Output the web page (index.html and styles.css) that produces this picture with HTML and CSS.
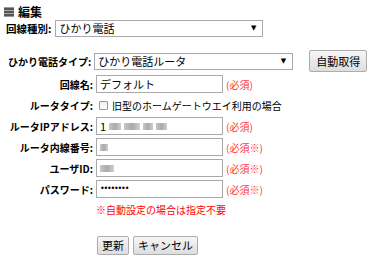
FILE: index.html
```html
<!DOCTYPE html>
<html lang="ja">
<head>
    <meta charset="UTF-8">
    <title>編集</title>
    <link rel="stylesheet" href="styles.css">
</head>
<body>
    <div class="page">
        <h1 class="title"><span class="icon"></span>編集</h1>

        <div class="kindRow">
            <span class="label">回線種別:</span>
            <div class="select kind">ひかり電話<span class="arrow">&#9660;</span></div>
        </div>

        <div class="typeRow">
            <span class="label">ひかり電話タイプ:</span>
            <div class="select type">ひかり電話ルータ<span class="arrow">&#9660;</span></div>
            <button class="btn auto">自動取得</button>
        </div>

        <div class="form">
            <span class="label">回線名:</span>
            <div class="field">デフォルト</div>
            <span class="must">(必須)</span>

            <span class="label">ルータタイプ:</span>
            <label class="check"><span class="box"></span>旧型のホームゲートウエイ利用の場合</label>

            <span class="label">ルータIPアドレス:</span>
            <div class="field">1<span class="blur b1"></span><span class="blur b2"></span><span class="blur b3"></span><span class="blur b4"></span></div>
            <span class="must">(必須)</span>

            <span class="label">ルータ内線番号:</span>
            <div class="field"><span class="blur b5"></span></div>
            <span class="must">(必須※)</span>

            <span class="label">ユーザID:</span>
            <div class="field"><span class="blur b6"></span></div>
            <span class="must">(必須※)</span>

            <span class="label">パスワード:</span>
            <div class="field pass">&bull;&bull;&bull;&bull;&bull;&bull;&bull;&bull;</div>
            <span class="must">(必須※)</span>

            <span class="note">※自動設定の場合は指定不要</span>
        </div>

        <div class="actions">
            <button class="btn">更新</button>
            <button class="btn">キャンセル</button>
        </div>
    </div>
</body>
</html>
```

FILE: styles.css
```css
*{
    margin: 0;
    padding: 0;
    box-sizing: border-box;
}
body{
    font-family: "Noto Sans CJK JP", sans-serif;
    font-size: 10px;
    color: #000;
    background-color: #fff;
}
.page{
    padding: 6px 0 0 4px;
}
.title{
    display: flex;
    align-items: center;
    gap: 4px;
    height: 12px;
    font-size: 12px;
    font-weight: bold;
    line-height: 12px;
}
.title .icon{
    width: 10px;
    height: 10px;
    background: linear-gradient(#999 0 1px, #555 1px 3px, #aaa 3px 4px, #555 4px 6px, #aaa 6px 7px, #555 7px 9px, #999 9px 10px);
}
.label{
    font-weight: bold;
    white-space: nowrap;
}
.kindRow{
    display: flex;
    align-items: center;
    margin-top: 2px;
    padding-left: 2px;
    font-size: 10.5px;
}
.select{
    position: relative;
    height: 17px;
    line-height: 15px;
    padding-left: 3px;
    border: 1px solid #a9a9a9;
    background-color: #fff;
    font-size: 11px;
}
.select .arrow{
    position: absolute;
    right: 6px;
    top: 0;
    font-size: 7px;
    font-family: "DejaVu Sans", sans-serif;
}
.select.kind{
    width: 208px;
    margin-left: 4px;
}
.typeRow{
    display: flex;
    align-items: center;
    margin-top: 13px;
    padding-left: 4px;
}
.select.type{
    width: 199px;
    margin-left: 3px;
}
.btn{
    height: 19px;
    padding: 0 4px;
    font-family: inherit;
    font-size: 11px;
    line-height: 17px;
    color: #000;
    border: 1px solid #adadad;
    border-radius: 2px;
    background: linear-gradient(#f6f6f6, #dddddd);
}
.btn.auto{
    height: 22px;
    margin-left: 16px;
    padding: 0 6px;
}
.form{
    display: grid;
    grid-template-columns: 89px 127px auto;
    column-gap: 3px;
    row-gap: 3px;
    align-items: center;
    margin-top: 3px;
}
.form .label{
    text-align: right;
}
.field{
    height: 18px;
    line-height: 16px;
    padding-left: 3px;
    border: 1px solid #a9a9a9;
    font-size: 11px;
    display: flex;
    align-items: center;
    gap: 3px;
}
.field.pass{
    font-family: "DejaVu Sans", sans-serif;
    font-size: 8px;
    letter-spacing: -1.2px;
}
.blur{
    display: inline-block;
    height: 7px;
    background: linear-gradient(90deg, #c8c8c8, #a9a9ad, #d0d0d0);
}
.b1{ width: 12px; }
.b2{ width: 16px; }
.b3{ width: 10px; }
.b4{ width: 11px; }
.b5{ width: 8px; }
.b6{ width: 14px; }
.must{
    color: #ff3333;
}
.check{
    grid-column: 2 / 4;
    display: flex;
    align-items: center;
    gap: 4px;
    height: 18px;
}
.check .box{
    width: 9px;
    height: 9px;
    margin-left: 3px;
    border: 1px solid #999;
    border-radius: 1px;
    background: linear-gradient(#eee, #fff);
}
.note{
    grid-column: 2 / 4;
    color: #f00;
    height: 18px;
    line-height: 18px;
}
.actions{
    display: flex;
    gap: 4px;
    margin: 17px 0 0 93px;
}
```
